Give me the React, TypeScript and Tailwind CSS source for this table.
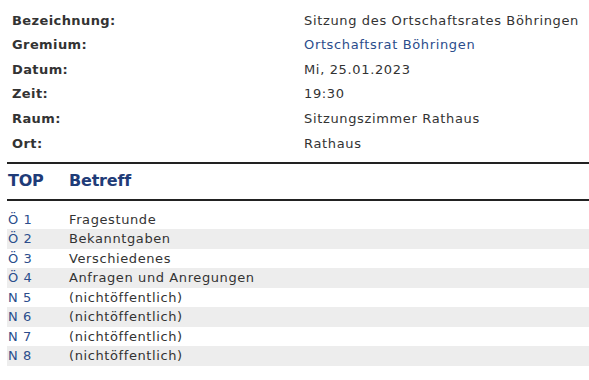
const details = [
  { label: 'Bezeichnung:', value: 'Sitzung des Ortschaftsrates Böhringen' },
  { label: 'Gremium:', value: 'Ortschaftsrat Böhringen', link: true },
  { label: 'Datum:', value: 'Mi, 25.01.2023' },
  { label: 'Zeit:', value: '19:30' },
  { label: 'Raum:', value: 'Sitzungszimmer Rathaus' },
  { label: 'Ort:', value: 'Rathaus' },
]

const tops = [
  { nr: 'Ö 1', betreff: 'Fragestunde' },
  { nr: 'Ö 2', betreff: 'Bekanntgaben' },
  { nr: 'Ö 3', betreff: 'Verschiedenes' },
  { nr: 'Ö 4', betreff: 'Anfragen und Anregungen' },
  { nr: 'N 5', betreff: '(nichtöffentlich)' },
  { nr: 'N 6', betreff: '(nichtöffentlich)' },
  { nr: 'N 7', betreff: '(nichtöffentlich)' },
  { nr: 'N 8', betreff: '(nichtöffentlich)' },
]

export default function App() {
  return (
    <div className="min-h-screen w-[589px] bg-white pl-[7px] pt-[8px] font-['DejaVu_Sans',Verdana,sans-serif] text-[13px] text-[#333333]">
      <div className="pl-[5px]">
        {details.map((d) => (
          <div key={d.label} className="grid h-[24.6px] grid-cols-[292px_1fr] items-center">
            <span className="font-bold tracking-[0.4px]">{d.label}</span>
            <span className={'tracking-[0.65px] ' + (d.link ? 'text-[#2b4d8c]' : '')}>{d.value}</span>
          </div>
        ))}
      </div>

      <div className="mt-[6px] border-y-2 border-[#222222]">
        <div className="grid h-[35px] grid-cols-[61px_1fr] items-center pl-[1px] text-[16px] font-bold tracking-[-0.2px] text-[#1f3c78]">
          <span>TOP</span>
          <span>Betreff</span>
        </div>
      </div>

      <div className="mt-[9px]">
        {tops.map((t, i) => (
          <div
            key={t.nr}
            className={
              'grid h-[19.5px] grid-cols-[61px_1fr] items-center pl-[1px] tracking-[0.6px] ' +
              (i % 2 === 1 ? 'bg-[#ededed]' : '')
            }
          >
            <span className="text-[#2b4d8c]">{t.nr}</span>
            <span>{t.betreff}</span>
          </div>
        ))}
      </div>
    </div>
  )
}
